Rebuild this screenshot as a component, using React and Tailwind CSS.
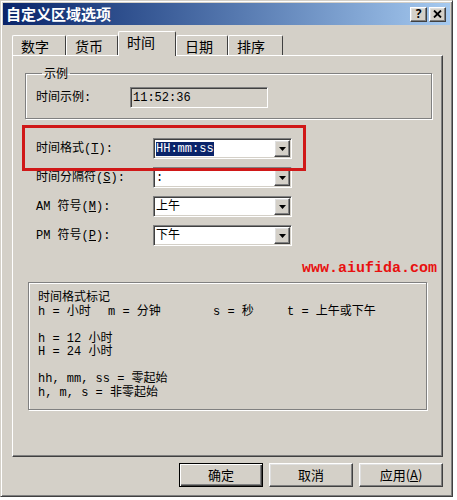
const mono = "font-['Liberation_Mono','Noto_Sans_CJK_SC',monospace]"
const cjk = "font-['Noto_Sans_CJK_SC','Noto_Sans',sans-serif]"

const raised =
  "border border-t-white border-l-white border-r-[#404040] border-b-[#404040] shadow-[inset_-1px_-1px_0_#808080,inset_1px_1px_0_#dfdfdf]"
const sunken =
  "border border-t-[#808080] border-l-[#808080] border-r-white border-b-white shadow-[inset_1px_1px_0_#404040,inset_-1px_-1px_0_#d4d0c8]"
const etched = "border border-[#808080] shadow-[inset_1px_1px_0_#fff,1px_1px_0_#fff]"

function Arrow() {
  return (
    <svg width="7" height="4" viewBox="0 0 7 4">
      <path d="M0 0h7L3.5 4z" fill="#000" />
    </svg>
  )
}

function Combo({ value, selected }) {
  return (
    <div className={`flex h-[21px] w-[139px] items-center bg-white ${sunken}`}>
      <div className={`flex-1 pl-[2px] text-[12px] leading-[14px] text-black ${mono}`}>
        {selected ? <span className="bg-[#0a246a] text-white">{value}</span> : value}
      </div>
      <div className={`mr-[1px] flex h-[17px] w-[16px] items-center justify-center bg-[#d4d0c8] ${raised}`}>
        <Arrow />
      </div>
    </div>
  )
}

function Row({ label, hot, rest, value, selected }) {
  return (
    <div className="ml-[23px] flex items-center">
      <div className={`w-[117px] text-[12px] leading-[14px] text-black ${mono}`}>
        {label}(<u>{hot}</u>){rest}
      </div>
      <Combo value={value} selected={selected} />
    </div>
  )
}

function Tab({ label, w, active }) {
  return (
    <div
      className={`${w} ${
        active ? "relative z-10 -mb-[1px] h-[25px] pt-[2px]" : "h-[20px] pt-[2px]"
      } rounded-t-[2px] border-t border-l border-r border-t-white border-l-white border-r-[#404040] bg-[#d4d0c8] pl-[8px] text-[14px] leading-[16px] text-black ${cjk}`}
    >
      {label}
    </div>
  )
}

function Button({ children, primary }) {
  return (
    <div
      className={`flex h-[24px] w-[84px] items-center justify-center bg-[#d4d0c8] text-[13px] text-black ${cjk} ${
        primary
          ? "border border-black shadow-[inset_1px_1px_0_#fff,inset_-1px_-1px_0_#404040,inset_-2px_-2px_0_#808080]"
          : raised
      }`}
    >
      {children}
    </div>
  )
}

export default function App() {
  return (
    <div className="h-[500px] w-[457px] bg-white">
      <div className="h-[497px] w-[453px] border border-t-[#d4d0c8] border-l-[#d4d0c8] border-r-[#404040] border-b-[#404040] bg-[#d4d0c8] p-[2px] shadow-[inset_1px_1px_0_#fff,inset_-1px_-1px_0_#808080]">
        {/* Title bar */}
        <div className="flex h-[22px] items-center bg-gradient-to-r from-[#0a246a] to-[#a6caf0] pl-[3px] pr-[4px]">
          <div className={`flex-1 text-[15px] font-bold leading-[18px] text-white ${cjk}`}>自定义区域选项</div>
          <div className="flex gap-[2px]">
            <div className={`flex h-[15px] w-[17px] items-center justify-center bg-[#d4d0c8] text-[12px] font-bold leading-none text-black ${raised}`}>
              ?
            </div>
            <div className={`flex h-[15px] w-[17px] items-center justify-center bg-[#d4d0c8] ${raised}`}>
              <svg width="9" height="8" viewBox="0 0 9 8">
                <path d="M1 0.5l7 7M8 0.5l-7 7" stroke="#000" strokeWidth="1.8" />
              </svg>
            </div>
          </div>
        </div>

        <div className="pl-[9px]">
          {/* Tabs */}
          <div className="mt-[6px] flex h-[24px] items-end">
            <Tab label="数字" w="w-[54px]" />
            <Tab label="货币" w="w-[52px]" />
            <Tab label="时间" w="w-[58px]" active />
            <Tab label="日期" w="w-[52px]" />
            <Tab label="排序" w="w-[55px]" />
          </div>

          {/* Panel */}
          <div className="relative h-[402px] w-[431px] border border-t-white border-l-white border-r-[#404040] border-b-[#404040] shadow-[inset_-1px_-1px_0_#808080]">
            <fieldset className={`ml-[12px] mt-[10px] w-[407px] pb-[10px] pl-[10px] ${etched}`}>
              <legend className={`ml-[6px] px-[2px] text-[12px] leading-[14px] text-black ${cjk}`}>示例</legend>
              <div className="mt-[7px] flex items-center">
                <div className={`w-[94px] text-[12px] leading-[14px] text-black ${mono}`}>时间示例:</div>
                <div className={`flex h-[21px] w-[138px] items-center pl-[2px] text-[12px] text-black ${mono} ${sunken}`}>
                  11:52:36
                </div>
              </div>
            </fieldset>

            <div className="mt-[19px] flex flex-col gap-[8px]">
              <Row label="时间格式" hot="T" rest=":" value="HH:mm:ss" selected />
              <Row label="时间分隔符" hot="S" rest=":" value=":" />
              <Row label="AM 符号" hot="M" rest=":" value="上午" />
              <Row label="PM 符号" hot="P" rest=":" value="下午" />
            </div>

            <div className="ml-[15px] mt-[36px] h-[128px] w-[399px] border border-[#808080] pl-[9px] pt-[9px] shadow-[inset_1px_1px_0_#fff,1px_1px_0_#fff]">
              <div className={`whitespace-pre text-[12px] leading-[13.5px] text-black ${mono}`}>
                <div>时间格式标记</div>
                <div className="flex">
                  <span className="w-[70px]">h = 小时</span>
                  <span className="w-[105px]">m = 分钟</span>
                  <span className="w-[74px]">s = 秒</span>
                  <span>t = 上午或下午</span>
                </div>
                <div>&nbsp;</div>
                <div>h = 12 小时</div>
                <div>H = 24 小时</div>
                <div>&nbsp;</div>
                <div>hh, mm, ss = 零起始</div>
                <div>h, m, s = 非零起始</div>
              </div>
            </div>

            {/* Red highlight */}
            <div className="absolute left-[9px] top-[69px] h-[46px] w-[284px] border-[3px] border-[#d01818]" />

            {/* Watermark */}
            <div className="absolute left-[289px] top-[204px] text-[15px] font-bold leading-[18px] text-[#e81010] font-['Liberation_Mono',monospace]">
              www.aiufida.com
            </div>
          </div>

          {/* Buttons */}
          <div className="mt-[6px] flex w-[431px] justify-end gap-[6px]">
            <Button primary>确定</Button>
            <Button>取消</Button>
            <Button>
              应用(<u>A</u>)
            </Button>
          </div>
        </div>
      </div>
    </div>
  )
}
